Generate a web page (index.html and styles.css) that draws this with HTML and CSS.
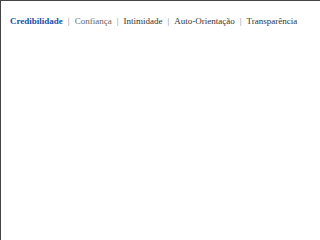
FILE: index.html
```html
<!DOCTYPE html>
<html lang="pt">
<head>
<meta charset="UTF-8">
<meta name="viewport" content="width=device-width, initial-scale=1.0">
<link rel="stylesheet" href="styles.css">
</head>
<body>
<div class="frame">
  <nav class="tabs">
    <a class="tab active">Credibilidade</a>
    <span class="sep">|</span>
    <a class="tab muted">Confiança</a>
    <span class="sep">|</span>
    <a class="tab">Intimidade</a>
    <span class="sep">|</span>
    <a class="tab">Auto-Orientação</a>
    <span class="sep">|</span>
    <a class="tab">Transparência</a>
  </nav>
</div>
</body>
</html>
```

FILE: styles.css
```css
html, body {
  margin: 0;
  overflow: hidden;
}
body {
  font-family: "Liberation Serif", serif;
  background: #fff;
}
.frame {
  height: 240px;
  width: 320px;
  border-top: 1px solid #444;
  border-left: 1px solid #444;
  box-sizing: border-box;
}
.tabs {
  display: flex;
  align-items: baseline;
  gap: 5px;
  padding: 15px 0 0 9px;
  font-size: 9px;
  color: #333;
  white-space: nowrap;
}
.tab.active {
  color: #1a4fae;
  font-weight: bold;
}
.tab.muted {
  color: #666;
}
.sep {
  color: #7385a8;
}
```
